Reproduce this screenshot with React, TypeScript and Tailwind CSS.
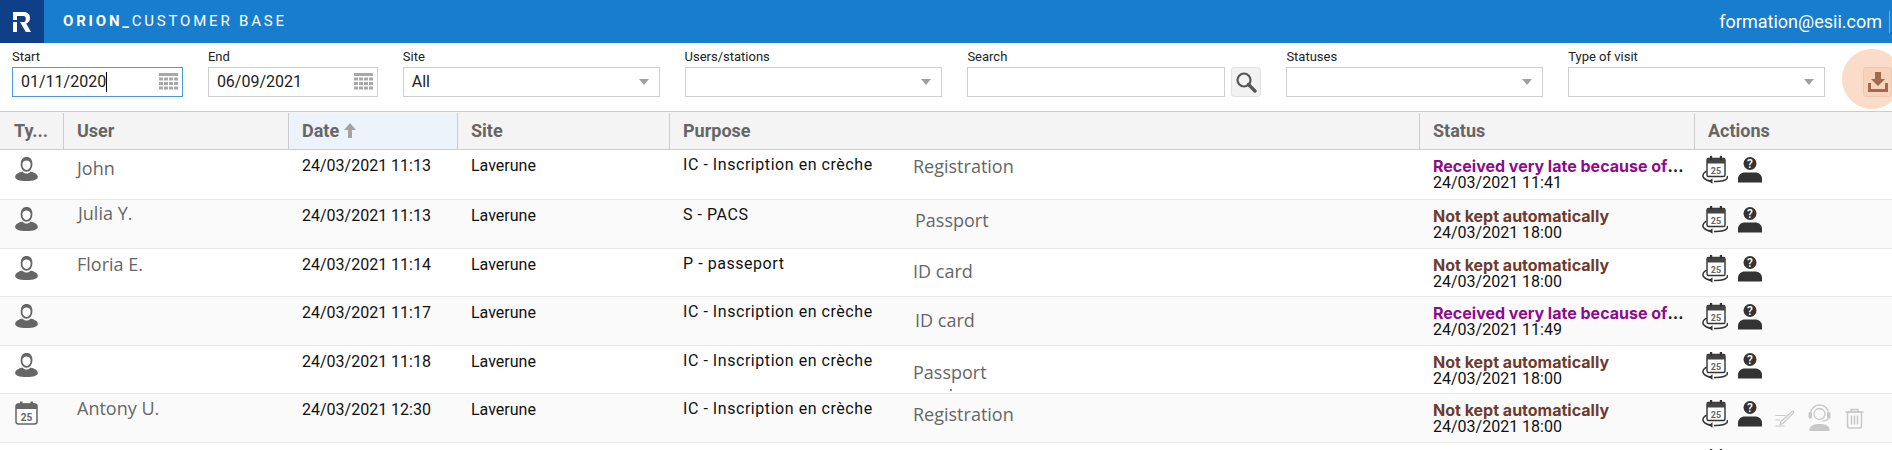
const UserIcon = () => (
  <svg width="23" height="24" viewBox="0 0 23 24" className="block">
    <path d="M6.500 7.500C6.500 3 8.500.8 11.500.8s5 2.200 5 6.700c0 3.200-2 6.300-5 6.300s-5-3.100-5-6.300z" fill="#fff" stroke="#666" strokeWidth="1.800" />
    <path d="M6.500 7c1-2 3-3.600 5-3.600S15.500 5 16.500 7c.5-4-1.500-6.200-5-6.200S6 3 6.500 7z" fill="#666" />
    <path d="M7.500 14.500C3.500 15.500.2 17 .2 20c0 2.500 4 4 11.300 4s11.300-1.500 11.300-4c0-3-3.300-4.500-7.300-5.500-1 1.400-2.300 2-4 2s-3-.6-4-2z" fill="#666" />
  </svg>
);

const CalendarIcon = () => (
  <svg width="23" height="24" viewBox="0 0 23 24" className="block">
    <rect x="1" y="3" width="21" height="20" rx="2.500" fill="#fff" stroke="#666" strokeWidth="1.500" />
    <path d="M1 5a2.500 2.500 0 0 1 2.500-2.500h16A2.500 2.500 0 0 1 22 5v3H1z" fill="#666" />
    <rect x="5" y="0.500" width="2.500" height="4" fill="#666" />
    <rect x="15.500" y="0.500" width="2.500" height="4" fill="#666" />
    <text x="11.500" y="20" textAnchor="middle" fontSize="10" fontWeight="700" fontFamily="Roboto, sans-serif" fill="#666">25</text>
  </svg>
);

const RescheduleIcon = () => (
  <svg width="26" height="28" viewBox="0 0 26 28" className="block">
    <rect x="5" y="2.500" width="18" height="18" rx="1.500" fill="#fff" stroke="#333" strokeWidth="1.400" />
    <path d="M5 4A1.500 1.500 0 0 1 6.500 2.500h15A1.500 1.500 0 0 1 23 4v3.500H5z" fill="#444" />
    <rect x="8" y="0" width="2.200" height="4" fill="#333" />
    <rect x="17.800" y="0" width="2.200" height="4" fill="#333" />
    <text x="14" y="17.800" textAnchor="middle" fontSize="9" fontWeight="700" fontFamily="Roboto, sans-serif" fill="#666">25</text>
    <path d="M4.500 15C1.500 17 .3 19.500 1.500 21.500c1.300 2 4.500 3.500 8.500 3.800" fill="none" stroke="#333" strokeWidth="1.500" />
    <path d="M10.500 22.300l-3.800 3 3.800 2.500z" fill="#333" />
    <path d="M12 25.500c5.500.2 11-.6 13-3 .6-.8.600-1.500.3-2.500" fill="none" stroke="#333" strokeWidth="1.500" />
  </svg>
);

const UnknownPersonIcon = () => (
  <svg width="24" height="26" viewBox="0 0 24 26" className="block">
    <circle cx="12" cy="6.500" r="6.500" fill="#333" />
    <text x="12" y="11" textAnchor="middle" fontSize="12" fontWeight="500" fontFamily="Roboto, sans-serif" fill="#fff">?</text>
    <path d="M0 25.500v-3.500c0-4 3-6.500 7-6.500h10c4 0 7 2.500 7 6.500v3.500z" fill="#333" />
  </svg>
);

const PenIcon = () => (
  <svg width="20" height="18" viewBox="0 0 20 18" fill="none" stroke="#c8c8c8" strokeWidth="1.200" className="block">
    <path d="M6 12.500 17 2.500c1-.8 2.200.4 1.400 1.400L8 14.500l-3 1z" />
    <path d="M0.500 6.500h10M0.500 11h5M0.500 17h9" />
  </svg>
);

const HeadsetIcon = () => (
  <svg width="23" height="27" viewBox="0 0 23 27" className="block">
    <circle cx="11.500" cy="10" r="5.500" fill="none" stroke="#c8c8c8" strokeWidth="1.300" />
    <path d="M2.500 10C2.500 4.500 6.500 1 11.500 1s9 3.500 9 9" fill="none" stroke="#c8c8c8" strokeWidth="1.500" />
    <rect x="0.500" y="8" width="3.500" height="6.500" rx="1.500" fill="#c8c8c8" />
    <rect x="19" y="8" width="3.500" height="6.500" rx="1.500" fill="#c8c8c8" />
    <path d="M20.500 14c-.5 2-3 3-6.500 3" fill="none" stroke="#c8c8c8" strokeWidth="1.200" />
    <path d="M1.500 27v-1.500c0-3.500 4-5.500 10-5.500s10 2 10 5.500V27z" fill="#c8c8c8" />
  </svg>
);

const TrashIcon = () => (
  <svg width="19" height="21" viewBox="0 0 19 21" fill="none" stroke="#c8c8c8" strokeWidth="1.500" className="block">
    <path d="M0.500 4h18M6 4V1.500h7V4" />
    <rect x="2.500" y="4" width="14" height="16" rx="2" />
    <path d="M6.500 7.500v9M9.500 7.500v9M12.500 7.500v9" />
  </svg>
);

const GridIcon = () => (
  <svg width="19" height="18" viewBox="0 0 19 18" className="block" fill="#a8a8a8">
    <rect x="0" y="0" width="19" height="3" />
    <path d="M0 4.500h4v3H0zM5 4.500h4v3H5zM10 4.500h4v3h-4zM15 4.500h4v3h-4zM0 9h4v3H0zM5 9h4v3H5zM10 9h4v3h-4zM15 9h4v3h-4zM0 13.500h4v3H0zM5 13.500h4v3H5zM10 13.500h4v3h-4zM15 13.500h4v3h-4z" />
  </svg>
);

const Caret = () => (
  <span className="w-0 h-0 border-x-[5px] border-t-[6px] border-x-transparent border-t-[#a0a0a0]" />
);

const Field = ({ label, width, children }: { label: string; width: string; children?: React.ReactNode }) => (
  <div className={width}>
    <div className="text-[13px] leading-[15px] mb-[3px] text-[#222]">{label}</div>
    {children}
  </div>
);

const SelectBox = ({ value }: { value?: string }) => (
  <div className="h-[30px] border border-[#cfcfcf] flex items-center justify-between pl-2 pr-[10px] text-base text-[#222]">
    <span>{value}</span>
    <Caret />
  </div>
);

type Visit = {
  kind: "walkin" | "booked";
  name: string;
  nameClass: string;
  time: string;
  purpose: string;
  note: string;
  noteClass: string;
  late: boolean;
  statusTime: string;
  rowClass: string;
  extra?: boolean;
  clipped?: boolean;
};

const visits: Visit[] = [
  { kind: "walkin", name: "John", nameClass: "mt-[6px]", time: "24/03/2021 11:13", purpose: "IC - Inscription en crèche", note: "Registration", noteClass: "mt-[-2px] ml-[-2px]", late: true, statusTime: "24/03/2021 11:41", rowClass: "h-[50px] bg-white" },
  { kind: "walkin", name: "Julia Y.", nameClass: "mt-[1px] ml-[1px]", time: "24/03/2021 11:13", purpose: "S - PACS", note: "Passport", noteClass: "mt-[2px]", late: false, statusTime: "24/03/2021 18:00", rowClass: "h-[49px] bg-[#fafafa]" },
  { kind: "walkin", name: "Floria E.", nameClass: "mt-[3px]", time: "24/03/2021 11:14", purpose: "P - passeport", note: "ID card", noteClass: "mt-[4px] ml-[-2px]", late: false, statusTime: "24/03/2021 18:00", rowClass: "h-[48px] bg-white" },
  { kind: "walkin", name: "", nameClass: "", time: "24/03/2021 11:17", purpose: "IC - Inscription en crèche", note: "ID card", noteClass: "mt-[5px]", late: true, statusTime: "24/03/2021 11:49", rowClass: "h-[49px] bg-[#fafafa]" },
  { kind: "walkin", name: "", nameClass: "", time: "24/03/2021 11:18", purpose: "IC - Inscription en crèche", note: "Passport", noteClass: "mt-[8px] ml-[-2px]", late: false, statusTime: "24/03/2021 18:00", rowClass: "h-[48px] bg-white", clipped: true },
  { kind: "booked", name: "Antony U.", nameClass: "mt-[2px]", time: "24/03/2021 12:30", purpose: "IC - Inscription en crèche", note: "Registration", noteClass: "mt-[2px] ml-[-2px]", late: false, statusTime: "24/03/2021 18:00", rowClass: "h-[49px] bg-[#fafafa]", extra: true },
  { kind: "booked", name: "", nameClass: "", time: "", purpose: "", note: "", noteClass: "", late: false, statusTime: "", rowClass: "h-[49px] bg-white", extra: true },
];

export default function App() {
  return (
    <div className="h-screen overflow-hidden bg-white font-['Roboto',sans-serif]">
      {/* Top bar */}
      <header className="h-[43px] bg-[#187dcc] flex items-center text-white">
        <div className="w-[44px] h-full bg-[#0f3f86] flex items-center justify-center">
          <svg width="18" height="20" viewBox="0 0 18 20" fill="#fff" className="ml-[-1px]">
            <path d="M0 0h10.500C15 0 17 2.500 17 6c0 2.800-1.500 4.700-3.800 5.500L18 20h-5.200L7 10h4c1.200 0 1.800-1.400 1.800-3.200C12.800 5 12 4 10.500 4H4v4H0z" />
            <path d="M0 10h4v10H0z" />
          </svg>
        </div>
        <div className="ml-[19px] text-[15px] tracking-[2.8px] whitespace-nowrap">
          <span className="font-bold">ORION_</span>
          <span>CUSTOMER BASE</span>
        </div>
        <div className="ml-auto mr-[7px] text-[18px]">formation@esii.com</div>
        <div className="w-px h-[22px] mr-[2px] bg-white/40" />
      </header>

      {/* Filters */}
      <div className="h-[68px] pt-[6px] pl-3 flex gap-[25px]">
        <Field label="Start" width="w-[171px]">
          <div className="h-[30px] border border-[#4a9ad8] flex items-center justify-between pl-2 pr-[4px] text-base text-[#222]">
            <span className="flex items-center">
              01/11/2020
              <span className="w-px h-[20px] bg-black" />
            </span>
            <GridIcon />
          </div>
        </Field>
        <Field label="End" width="w-[170px]">
          <div className="h-[30px] border border-[#cfcfcf] flex items-center justify-between pl-2 pr-[4px] text-base text-[#222]">
            <span>06/09/2021</span>
            <GridIcon />
          </div>
        </Field>
        <Field label="Site" width="w-[257px]">
          <SelectBox value="All" />
        </Field>
        <Field label="Users/stations" width="w-[258px]">
          <SelectBox />
        </Field>
        <div className="flex gap-[6px] items-start">
          <Field label="Search" width="w-[258px]">
            <div className="h-[30px] border border-[#cfcfcf]" />
          </Field>
          <button className="mt-[18px] w-[30px] h-[30px] rounded-[3px] border border-[#e2e2e2] bg-[#f2f2f2] flex items-center justify-center">
            <svg width="22" height="22" viewBox="0 0 22 22" fill="none" stroke="#555">
              <circle cx="9" cy="9" r="6.500" strokeWidth="2.200" />
              <path d="M13.500 13.500 20 20" strokeWidth="3.400" strokeLinecap="round" />
            </svg>
          </button>
        </div>
        <Field label="Statuses" width="w-[257px]">
          <SelectBox />
        </Field>
        <Field label="Type of visit" width="w-[257px]">
          <SelectBox />
        </Field>
        <div className="relative ml-[13px] mt-[18px] w-[29px] h-[30px]">
          <div className="absolute left-[-21px] top-[-18px] w-[60px] h-[60px] rounded-full bg-[#fbdcc8]" />
          <button className="relative w-[29px] h-[30px] rounded-[3px] border border-[#eac9b3] bg-[#f7d3bc] flex items-center justify-center">
            <svg width="20" height="20" viewBox="0 0 20 20" fill="#a06a50">
              <path d="M7 0h6v7h4l-7 7-7-7h4z" />
              <path d="M0 11h3v6h14v-6h3v9H0z" />
            </svg>
          </button>
        </div>
      </div>

      {/* Table head */}
      <div className="h-[39px] bg-[#f4f4f4] border-y border-[#cccccc] flex items-center text-[18px] font-bold text-[#666]">
        <div className="w-[64px] h-[36px] pl-[14px] flex items-center border-r border-[#cccccc]">Ty...</div>
        <div className="w-[225px] h-[36px] pl-[13px] flex items-center border-r border-[#cccccc]">User</div>
        <div className="w-[169px] h-[36px] pl-[13px] flex items-center gap-[5px] bg-[#ecf3fb] border-r border-[#cccccc]">
          Date
          <svg width="12" height="15" viewBox="0 0 12 15" fill="#a3a3a3">
            <path d="M6 0l6 7H8v8H4V7H0z" />
          </svg>
        </div>
        <div className="w-[212px] h-[36px] pl-[13px] flex items-center border-r border-[#cccccc]">Site</div>
        <div className="w-[750px] h-[36px] pl-[13px] flex items-center border-r border-[#cccccc]">Purpose</div>
        <div className="w-[275px] h-[36px] pl-[13px] flex items-center border-r border-[#cccccc]">Status</div>
        <div className="pl-[13px]">Actions</div>
      </div>

      {/* Rows */}
      {visits.map((v, i) => (
        <div key={i} className={`${v.rowClass} flex overflow-hidden border-b border-[#e8e8e8] text-base leading-[18px] text-[#111]`}>
          <div className="w-[64px] pl-[15px] pt-[7px] shrink-0">
            {v.kind === "walkin" ? <UserIcon /> : <CalendarIcon />}
          </div>
          <div className="w-[225px] pl-[13px] shrink-0">
            <div className={`${v.nameClass} font-['Open_Sans',sans-serif] text-[18px] leading-[24px] text-[#666]`}>{v.name}</div>
          </div>
          <div className="w-[169px] pl-[13px] pt-[7px] shrink-0">{v.time}</div>
          <div className="w-[212px] pl-[13px] pt-[7px] shrink-0">{v.purpose ? "Laverune" : ""}</div>
          <div className="w-[750px] pl-[13px] pt-[6px] shrink-0 flex">
            <div className="w-[232px] shrink-0 tracking-[0.55px]">{v.purpose}</div>
            <div>
              <div className={`${v.noteClass} font-['Open_Sans',sans-serif] text-[18px] leading-[24px] text-[#666]`}>{v.note}</div>
              {v.clipped && <div className="w-[2px] h-[2px] ml-[35px] mt-[5px] bg-[#888]" />}
            </div>
          </div>
          <div className="w-[275px] pl-[13px] pr-[10px] pt-[7px] shrink-0">
            {v.statusTime && (
              <>
                <div className="truncate font-['Inter',sans-serif] font-bold text-[#222]">
                  <span className={v.late ? "text-[#8e0a8e]" : "text-[#6e3b2e]"}>
                    {v.late ? "Received very late because of the traffic jam" : "Not kept automatically"}
                  </span>
                </div>
                <div className="leading-[16px]">{v.statusTime}</div>
              </>
            )}
          </div>
          <div className="pl-[7px] pt-[6px] flex items-start gap-[10px]">
            <RescheduleIcon />
            <div className="mt-[1px]">
              <UnknownPersonIcon />
            </div>
            {v.extra && (
              <>
                <div className="ml-[3px] mt-[9px]"><PenIcon /></div>
                <div className="ml-[3px] mt-[4px]"><HeadsetIcon /></div>
                <div className="ml-[4px] mt-[8px]"><TrashIcon /></div>
              </>
            )}
          </div>
        </div>
      ))}
    </div>
  );
}
